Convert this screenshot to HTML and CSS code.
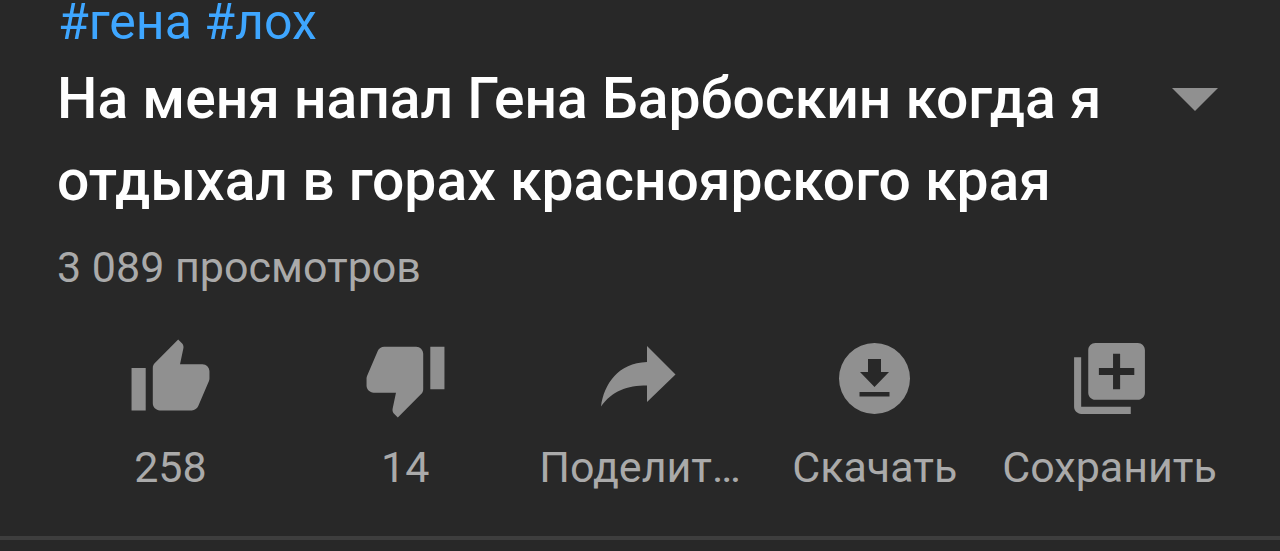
FILE: index.html
```html
<!DOCTYPE html>
<html lang="ru">
<head>
<meta charset="utf-8">
<meta name="viewport" content="width=device-width, initial-scale=1">
<title>На меня напал Гена Барбоскин</title>
<link rel="stylesheet" href="styles.css">
</head>
<body>
<main class="video-info">
  <nav class="tags"><a href="#gena">#гена</a> <a href="#loh">#лох</a></nav>
  <div class="heading">
    <h1 class="title">На меня напал Гена Барбоскин когда я отдыхал в горах красноярского края</h1>
    <button class="expand" type="button" aria-label="Показать описание">
      <svg class="caret" viewBox="0 0 46 23" aria-hidden="true"><path d="M0 0h46L23 23z"/></svg>
    </button>
  </div>
  <p class="views">3 089 просмотров</p>
  <div class="actions">
    <button class="action" type="button">
      <svg class="icon" viewBox="0 0 24 24" aria-hidden="true"><path d="M1 21h4V9H1v12zm22-11c0-1.100-.900-2-2-2h-6.310l.950-4.570.030-.320c0-.410-.170-.790-.440-1.060L14.170 1 7.590 7.590C7.220 7.950 7 8.450 7 9v10c0 1.100.900 2 2 2h9c.830 0 1.540-.500 1.840-1.220l3.020-7.050c.090-.230.140-.470.140-.730v-2z"/></svg>
      <span class="label">258</span>
    </button>
    <button class="action" type="button">
      <svg class="icon" viewBox="0 0 24 24" aria-hidden="true"><path d="M15 3H6c-.83 0-1.540.500-1.840 1.220l-3.020 7.050c-.090.230-.140.470-.140.730v2c0 1.100.900 2 2 2h6.310l-.950 4.570-.030.320c0 .410.170.790.440 1.060L9.830 23l6.590-6.590c.360-.360.580-.860.580-1.410V5c0-1.100-.900-2-2-2zm4 0v12h4V3h-4z"/></svg>
      <span class="label">14</span>
    </button>
    <button class="action" type="button">
      <svg class="icon" viewBox="0 0 85 85" aria-hidden="true"><path d="M50 10l28.500 28.500L50 66V49.500C30 49.500 15 55 4 70.500C7 48 21 27 50 26z"/></svg>
      <span class="label">Поделит…</span>
    </button>
    <button class="action" type="button">
      <svg class="icon" viewBox="0 0 85 85" aria-hidden="true"><path fill-rule="evenodd" d="M42.500 7a35.500 35.500 0 1 0 0 71a35.500 35.500 0 1 0 0-71zM36 23h13v13h8L42.500 51L28 36h8zM27.500 56h30v4.500h-30z"/></svg>
      <span class="label">Скачать</span>
    </button>
    <button class="action" type="button">
      <svg class="icon" viewBox="0 0 24 24" aria-hidden="true"><path d="M4 6H2v14c0 1.100.900 2 2 2h14v-2H4V6zm16-4H8c-1.100 0-2 .900-2 2v12c0 1.100.900 2 2 2h12c1.100 0 2-.900 2-2V4c0-1.100-.900-2-2-2zm-1 9h-4v4h-2v-4H9V9h4V5h2v4h4v2z"/></svg>
      <span class="label">Сохранить</span>
    </button>
  </div>
</main>
</body>
</html>
```
FILE: styles.css
```css
* {
  box-sizing: border-box;
}

body {
  margin: 0;
  background: #282828;
  color: #fff;
  font-family: Roboto, "Noto Sans", sans-serif;
}

.video-info {
  border-bottom: 4px solid #3e3e3e;
  padding-bottom: 43px;
}

.tags {
  padding: 0 58px;
  font-size: 50px;
  line-height: 44px;
}

.tags a {
  color: #3ea6ff;
  text-decoration: none;
}

.heading {
  display: flex;
  align-items: flex-start;
  justify-content: space-between;
  gap: 64px;
  padding: 14px 62px 0 57px;
}

.title {
  flex: 1;
  margin: 0;
  font-size: 57px;
  font-weight: 500;
  line-height: 82px;
}

.expand,
.action {
  border: 0;
  padding: 0;
  background: none;
  font: inherit;
  cursor: pointer;
}

.expand {
  margin-top: 30px;
}

.caret {
  display: block;
  width: 46px;
  height: 23px;
  fill: #909090;
}

.views {
  margin: 0;
  padding: 20px 57px 0;
  color: #aaa;
  font-size: 43px;
  line-height: 50px;
}

.actions {
  display: grid;
  grid-template-columns: repeat(5, minmax(0, 1fr));
  padding: 44px 53px 0;
}

.action {
  display: flex;
  flex-direction: column;
  align-items: center;
  gap: 20px;
  padding: 0 8px;
  color: #aaa;
  font-size: 43px;
  line-height: 52px;
}

.icon {
  width: 85px;
  height: 85px;
  fill: #909090;
}

.label {
  max-width: 100%;
  overflow: hidden;
  text-overflow: ellipsis;
  white-space: nowrap;
}
```
